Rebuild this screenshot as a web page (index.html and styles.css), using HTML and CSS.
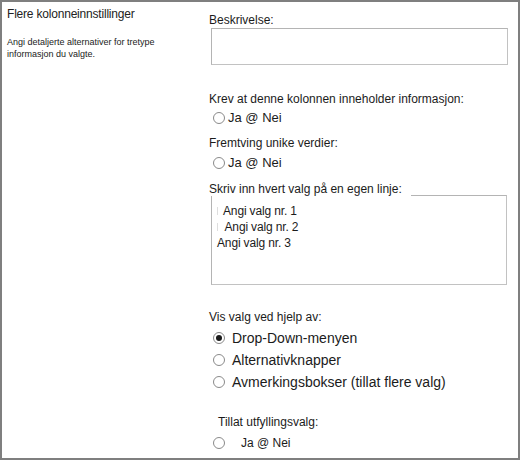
FILE: index.html
```html
<!DOCTYPE html>
<html lang="no">
<head>
<meta charset="utf-8">
<title>Flere kolonneinnstillinger</title>
<link rel="stylesheet" href="styles.css">
</head>
<body>
<div class="frame">
  <div class="side">
    <div class="side-title">Flere kolonneinnstillinger</div>
    <div class="side-desc">Angi detaljerte alternativer for tretype<br>informasjon du valgte.</div>
  </div>
  <div class="main">
    <div class="label l-desc">Beskrivelse:</div>
    <div class="inputbox"></div>

    <div class="label l-req">Krev at denne kolonnen inneholder informasjon:</div>
    <div class="opt opt-13 o-req"><span class="radio"></span><span class="opt-text">Ja @ Nei</span></div>

    <div class="label l-uniq">Fremtving unike verdier:</div>
    <div class="opt opt-13 o-uniq"><span class="radio"></span><span class="opt-text">Ja @ Nei</span></div>

    <div class="label l-choices">Skriv inn hvert valg på en egen linje:</div>
    <div class="choicebox">
      <div class="choice c1"><span class="tick"></span>Angi valg nr. 1</div>
      <div class="choice c2"><span class="tick"></span>Angi valg nr. 2</div>
      <div class="choice c3">Angi valg nr. 3</div>
    </div>

    <div class="label l-show">Vis valg ved hjelp av:</div>
    <div class="big-opts">
      <div class="opt opt-14"><span class="radio checked"><span class="dot"></span></span><span class="opt-text">Drop-Down-menyen</span></div>
      <div class="opt opt-14"><span class="radio"></span><span class="opt-text">Alternativknapper</span></div>
      <div class="opt opt-14"><span class="radio"></span><span class="opt-text">Avmerkingsbokser (tillat flere valg)</span></div>
    </div>

    <div class="label l-fill">Tillat utfyllingsvalg:</div>
    <div class="opt opt-12 o-fill"><span class="radio"></span><span class="opt-text">Ja @ Nei</span></div>
  </div>
</div>
</body>
</html>
```
FILE: styles.css
```css
* { box-sizing: border-box; }
html, body { margin: 0; padding: 0; background: #fff; }
body {
  font-family: "Liberation Sans", Arial, sans-serif;
  color: #1b1b1b;
}
.frame {
  width: 520px;
  height: 460px;
  border: 2px solid #7f7f7f;
  display: flex;
  overflow: hidden;
}
.side {
  width: 207px;
  flex: none;
  padding: 5px 0 0 5px;
}
.side-title {
  font-size: 12px;
  line-height: 14px;
  letter-spacing: -0.2px;
  color: #222;
}
.side-desc {
  margin-top: 16px;
  font-size: 9px;
  line-height: 11.5px;
  color: #222;
}
.main {
  flex: 1;
  display: flex;
  flex-direction: column;
  align-items: flex-start;
}
.label {
  font-size: 12px;
  line-height: 14px;
}
.l-desc { margin-top: 11px; }
.inputbox {
  margin: 1px 0 0 2px;
  width: 297px;
  height: 37px;
  border: 1px solid #c2c2c2;
  border-top-color: #b4b4b4;
  border-left-color: #b4b4b4;
}
.l-req { margin-top: 27px; }
.opt {
  display: flex;
  align-items: center;
  margin-left: 4px;
}
.opt-13 { font-size: 13px; line-height: 16px; }
.opt-12 { font-size: 12px; line-height: 14px; }
.opt-14 { font-size: 14px; line-height: 22px; }
.radio {
  flex: none;
  width: 12px;
  height: 12px;
  border: 1px solid #8a8a8a;
  border-radius: 50%;
  display: inline-flex;
  align-items: center;
  justify-content: center;
  background: #fff;
}
.dot {
  width: 6px;
  height: 6px;
  border-radius: 50%;
  background: #1a1a1a;
}
.opt-13 .opt-text { margin-left: 3px; }
.o-req { margin-top: 4px; }
.l-uniq { margin-top: 10px; }
.o-uniq { margin-top: 5px; }
.l-choices {
  margin-top: 11px;
  background: #fff;
  padding-right: 9px;
  position: relative;
  z-index: 1;
}
.choicebox {
  margin: -1px 0 0 2px;
  width: 296px;
  height: 90px;
  border: 1px solid #c2c2c2;
  border-top-color: #b4b4b4;
  border-left-color: #b4b4b4;
  padding: 7px 0 0 5px;
}
.choice {
  font-size: 12px;
  line-height: 16px;
  letter-spacing: -0.15px;
  display: flex;
  align-items: center;
}
.tick {
  width: 1px;
  height: 8px;
  background: #dedede;
  margin-right: 5px;
}
.c2 .tick { margin-right: 6.5px; }
.l-show { margin-top: 25px; }
.big-opts { margin-top: 3px; display: flex; flex-direction: column; }
.opt-14 .opt-text { margin-left: 7px; }
.l-fill { margin-top: 22px; margin-left: 9px; }
.o-fill { margin-top: 7px; }
.o-fill .opt-text { margin-left: 16px; }
```
